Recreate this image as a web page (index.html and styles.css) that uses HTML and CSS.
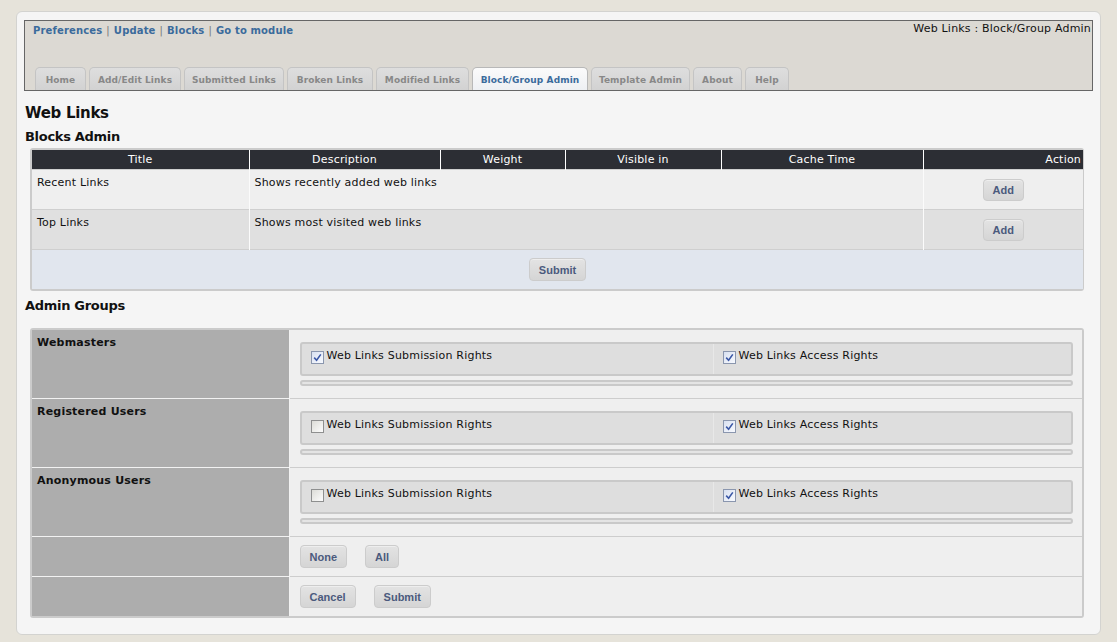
FILE: index.html
```html
<!DOCTYPE html>
<html>
<head>
<meta charset="utf-8">
<link rel="stylesheet" href="styles.css">
</head>
<body>
<div class="panel">
  <div class="modhead">
    <div class="toprow">
      <div class="links"><a>Preferences</a><span class="sep">|</span><a>Update</a><span class="sep">|</span><a>Blocks</a><span class="sep">|</span><a>Go to module</a></div>
      <div class="crumb">Web Links : Block/Group Admin</div>
    </div>
    <div class="tabs">
      <span class="tab t-home">Home</span>
      <span class="tab t-add">Add/Edit Links</span>
      <span class="tab t-sub">Submitted Links</span>
      <span class="tab t-brk">Broken Links</span>
      <span class="tab t-mod">Modified Links</span>
      <span class="tab active t-blk">Block/Group Admin</span>
      <span class="tab t-tpl">Template Admin</span>
      <span class="tab t-abt">About</span>
      <span class="tab t-hlp">Help</span>
    </div>
  </div>

  <h1 class="h1">Web Links</h1>
  <h2 class="h2">Blocks Admin</h2>

  <div class="box">
    <table class="blocks">
      <colgroup>
        <col class="c-title"><col class="c-desc"><col class="c-weight"><col class="c-vis"><col class="c-cache"><col class="c-act">
      </colgroup>
      <thead>
        <tr><th>Title</th><th>Description</th><th>Weight</th><th>Visible in</th><th>Cache Time</th><th class="right">Action</th></tr>
      </thead>
      <tbody>
        <tr class="odd"><td>Recent Links</td><td colspan="4">Shows recently added web links</td><td class="act"><button class="btn">Add</button></td></tr>
        <tr class="even"><td>Top Links</td><td colspan="4">Shows most visited web links</td><td class="act"><button class="btn">Add</button></td></tr>
        <tr class="foot"><td colspan="6"><button class="btn">Submit</button></td></tr>
      </tbody>
    </table>
  </div>

  <h2 class="h2 h2b">Admin Groups</h2>

  <div class="box box2">
    <table class="groups">
      <colgroup><col class="g-label"><col class="g-body"></colgroup>
      <tbody>
        <tr>
          <th>Webmasters</th>
          <td>
            <div class="perm">
              <div class="pcell first"><span class="cb on"><svg width="9" height="9" viewBox="0 0 9 9"><path d="M1.2 4.6 L3.6 7.2 L7.8 1.4" fill="none" stroke="#3a57a6" stroke-width="1.6"/></svg></span>Web Links Submission Rights</div>
              <div class="pcell"><span class="cb on"><svg width="9" height="9" viewBox="0 0 9 9"><path d="M1.2 4.6 L3.6 7.2 L7.8 1.4" fill="none" stroke="#3a57a6" stroke-width="1.6"/></svg></span>Web Links Access Rights</div>
            </div>
            <div class="bar"></div>
          </td>
        </tr>
        <tr>
          <th>Registered Users</th>
          <td>
            <div class="perm">
              <div class="pcell first"><span class="cb"></span>Web Links Submission Rights</div>
              <div class="pcell"><span class="cb on"><svg width="9" height="9" viewBox="0 0 9 9"><path d="M1.2 4.6 L3.6 7.2 L7.8 1.4" fill="none" stroke="#3a57a6" stroke-width="1.6"/></svg></span>Web Links Access Rights</div>
            </div>
            <div class="bar"></div>
          </td>
        </tr>
        <tr>
          <th>Anonymous Users</th>
          <td>
            <div class="perm">
              <div class="pcell first"><span class="cb"></span>Web Links Submission Rights</div>
              <div class="pcell"><span class="cb on"><svg width="9" height="9" viewBox="0 0 9 9"><path d="M1.2 4.6 L3.6 7.2 L7.8 1.4" fill="none" stroke="#3a57a6" stroke-width="1.6"/></svg></span>Web Links Access Rights</div>
            </div>
            <div class="bar"></div>
          </td>
        </tr>
        <tr class="btnrow">
          <th></th>
          <td><div class="btns"><button class="btn">None</button><button class="btn">All</button></div></td>
        </tr>
        <tr class="btnrow">
          <th></th>
          <td><div class="btns"><button class="btn">Cancel</button><button class="btn">Submit</button></div></td>
        </tr>
      </tbody>
    </table>
  </div>
</div>
</body>
</html>
```

FILE: styles.css
```css
html, body {
  margin: 0;
  padding: 0;
}
body {
  background: #e6e3da;
  font-family: "DejaVu Sans", Verdana, sans-serif;
  font-size: 11px;
  letter-spacing: 0.2px;
  color: #111;
}
.panel {
  margin: 11px 16px 0 16px;
  background: #f5f5f5;
  border: 1px solid #d3d3d0;
  border-radius: 6px;
  padding: 8px 7px 15px 7px;
  box-sizing: border-box;
  height: 624px;
}
.modhead {
  border: 1px solid #666;
  background: #dcd9d3;
  height: 69px;
  display: flex;
  flex-direction: column;
}
.toprow {
  display: flex;
  justify-content: space-between;
  align-items: flex-start;
  padding: 0 1px 0 8px;
}
.links {
  margin-top: 4px;
  font-size: 10px;
  letter-spacing: 0.15px;
  font-weight: bold;
  color: #3b6b9c;
  white-space: nowrap;
}
.links a { color: #3b6b9c; }
.sep {
  color: #777;
  font-weight: normal;
  margin: 0 4px;
}
.crumb {
  margin-top: 1px;
  color: #111;
}
.tabs {
  margin-top: auto;
  display: flex;
  align-items: flex-end;
  padding-left: 10px;
  gap: 3px;
}
.tab {
  height: 23px;
  line-height: 25px;
  box-sizing: border-box;
  border: 1px solid #c4c4c4;
  border-bottom: none;
  border-radius: 5px 5px 0 0;
  background: linear-gradient(#dedede, #d2d2d2);
  color: #888;
  font-size: 9px;
  letter-spacing: 0.1px;
  font-weight: bold;
  text-align: center;
  padding: 0;
}
.t-home { width: 51px; }
.t-add { width: 92px; }
.t-sub { width: 100px; }
.t-brk { width: 86px; }
.t-mod { width: 93px; }
.t-blk { width: 116px; }
.t-tpl { width: 99px; }
.t-abt { width: 49px; }
.t-hlp { width: 44px; }
.tab.active {
  background: linear-gradient(#fbfbfb, #eef0f3);
  color: #3b6b9c;
  border-color: #b8b8b8;
}
.h1 {
  font-size: 15px;
  font-weight: bold;
  letter-spacing: -0.3px;
  margin: 13px 0 0 1px;
  line-height: 18px;
}
.h2 {
  font-size: 13px;
  font-weight: bold;
  letter-spacing: -0.3px;
  margin: 7px 0 0 1px;
  line-height: 16px;
}
.h2b {
  margin-top: 7px;
}
.box {
  margin: 3px 9px 0 6px;
  border: 2px solid #cbcbcb;
  border-radius: 3px;
  background: #f5f5f5;
}
.box2 {
  margin-top: 14px;
}
table {
  border-collapse: collapse;
  width: 100%;
  table-layout: fixed;
}
.blocks th {
  background: #2c2e34;
  color: #fff;
  font-weight: normal;
  height: 18px;
  line-height: 18px;
  padding: 1px 2px 0 2px;
  border-left: 1px solid #fff;
  text-align: center;
}
.blocks th:first-child { border-left: none; }
.blocks th.right { text-align: right; }
.c-title { width: 217px; }
.c-desc { width: 191px; }
.c-weight { width: 125px; }
.c-vis { width: 156px; }
.c-cache { width: 202px; }
.c-act { width: 160px; }
.blocks td {
  vertical-align: top;
  padding: 6px 5px;
  height: 27px;
  border-left: 1px solid #fbfbfb;
  border-top: 1px solid #cfcfcf;
}
.blocks td:first-child { border-left: none; }
.blocks tr.odd td { background: #efefef; }
.blocks tr.even td { background: #e0e0e0; }
.blocks td.act {
  text-align: center;
  vertical-align: middle;
  padding: 0;
}
.blocks tr.foot td {
  background: #e1e6ee;
  text-align: center;
  vertical-align: middle;
  padding: 0;
  height: 39px;
}
.btn {
  font-family: "Liberation Sans", Arial, sans-serif;
  font-size: 11px;
  letter-spacing: 0;
  font-weight: bold;
  color: #4b5a7d;
  background: linear-gradient(#e3e3e3, #d5d5d5);
  border: 1px solid #cccccc;
  border-radius: 4px;
  height: 23px;
  padding: 0 9px;
  box-shadow: inset 0 1px 0 #eeeeee;
}
.blocks .act .btn { height: 22px; }
.g-label { width: 257px; }
.groups th {
  background: #adadad;
  text-align: left;
  vertical-align: top;
  font-weight: bold;
  padding: 6px 5px;
  border-top: 1px solid #f2f2f2;
  border-right: 1px solid #f2f2f2;
}
.groups tr:first-child th,
.groups tr:first-child td { border-top: none; }
.groups td {
  background: #efefef;
  border-top: 1px solid #cdcdcd;
  padding: 12px 9px 12px 10px;
  vertical-align: top;
}
.perm {
  display: flex;
  height: 34px;
  box-sizing: border-box;
  border: 2px solid #c9c9c9;
  border-radius: 3px;
  background: #dedede;
}
.pcell {
  padding: 5px 9px;
  flex: 0 0 auto;
  display: flex;
  align-items: flex-start;
}
.pcell.first {
  width: 412px;
  box-sizing: border-box;
  border-right: 1px solid #e8e8e8;
}
.cb {
  width: 13px;
  height: 13px;
  box-sizing: border-box;
  border: 1px solid #8e8f8f;
  background: linear-gradient(135deg, #dcdcd7, #fcfcfc);
  margin: 2px 3px 0 0;
  display: inline-flex;
  align-items: center;
  justify-content: center;
}
.cb.on {
  border-color: #8a96ae;
  background: linear-gradient(135deg, #d8e0f0, #f8faff);
}
.bar {
  margin-top: 4px;
  height: 6px;
  box-sizing: border-box;
  border: 2px solid #c9c9c9;
  border-radius: 3px;
  background: #e4e4e4;
}
.groups tr.btnrow td {
  padding: 8px 9px 8px 10px;
  height: 23px;
}
.btns {
  display: flex;
  gap: 18px;
}
```
